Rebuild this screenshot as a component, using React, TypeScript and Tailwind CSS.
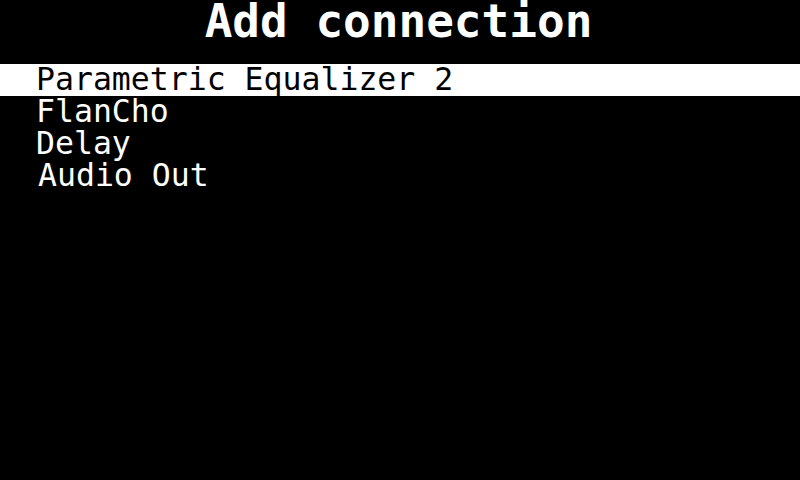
const items = ["Parametric Equalizer 2", "FlanCho", "Delay", "Audio Out"];

export default function App() {
  const selected = 0;
  return (
    <div
      className="w-[800px] h-[480px] bg-black text-white overflow-hidden"
      style={{ fontFamily: '"DejaVu Sans Mono", monospace' }}
    >
      <div className="h-[64px] flex justify-center">
        <h1 className="text-[46px] leading-[46px] font-bold mt-[-2px] ml-[-3px]">Add connection</h1>
      </div>
      <ul>
        {items.map((item, i) => (
          <li
            key={item}
            className={
              "h-[32px] pl-[36px] text-[31.5px] leading-[30px] whitespace-pre " +
              (i === selected ? "bg-white text-black" : "") +
              (i === items.length - 1 ? " pl-[38px]" : "")
            }
          >
            {item}
          </li>
        ))}
      </ul>
    </div>
  );
}
